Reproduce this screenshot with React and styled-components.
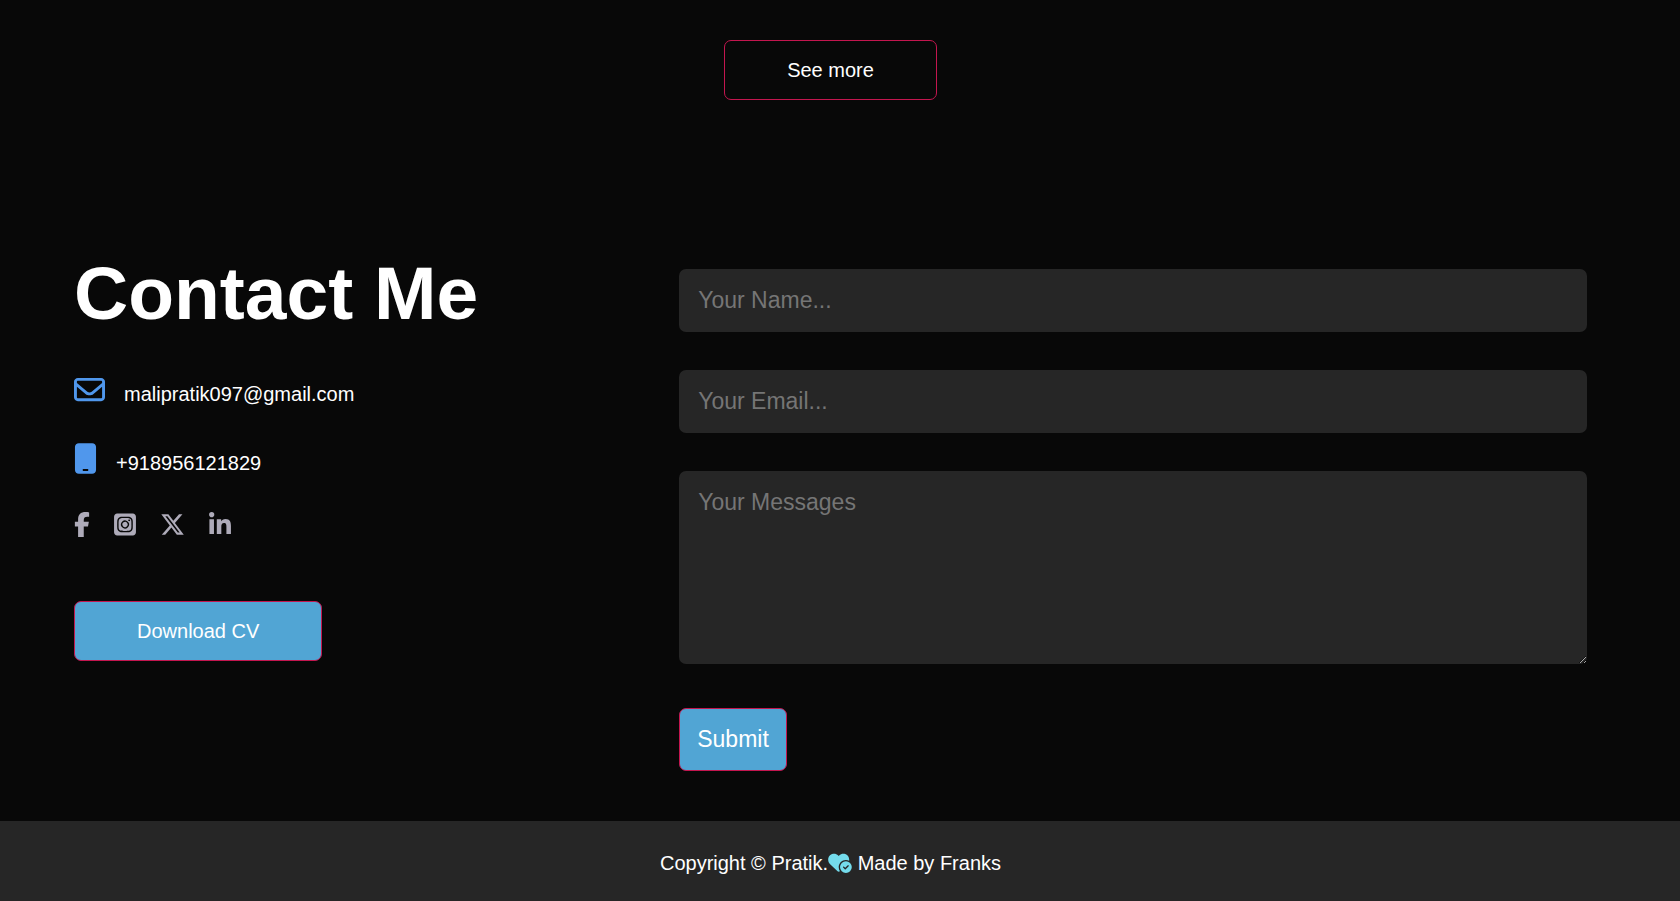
import React from 'react';
import styled, { createGlobalStyle, css } from 'styled-components';
import {
  FaRegEnvelope,
  FaMobile,
  FaFacebookF,
  FaSquareInstagram,
  FaXTwitter,
  FaLinkedinIn,
  FaHeartCircleCheck,
} from 'react-icons/fa6';

const GlobalStyle = createGlobalStyle`
  *, *::before, *::after { box-sizing: border-box; }
  body {
    margin: 0;
    background: #080808;
    color: #fff;
    font-family: "Liberation Sans", Arial, sans-serif;
    font-size: 20px;
    line-height: 23px;
  }
  a { color: inherit; text-decoration: none; }
  button, input, textarea { font-family: inherit; }
`;

const Page = styled.div`
  display: flex;
  flex-direction: column;
  min-height: 100vh;
`;

const Projects = styled.section`
  display: flex;
  justify-content: center;
  padding: 40px 19px 0 0;
`;

const outlined = css`
  border: 1px solid #c3164f;
  border-radius: 7px;
  color: #fff;
`;

const LinkButton = styled.a`
  ${outlined}
  align-self: flex-start;
  padding: 18px 62px 17px;
  background: ${(p) => (p.$filled ? '#51a5d4' : 'transparent')};
`;

const Contact = styled.main`
  display: flex;
  justify-content: space-between;
  padding: 150px 93px 50px 74px;
`;

const Details = styled.section`
  display: flex;
  flex-direction: column;
  flex-basis: 35%;
  gap: 38px;
`;

const Heading = styled.h1`
  margin: 0;
  font-size: 75px;
  line-height: 86px;
  font-weight: 700;
`;

const ContactLine = styled.a`
  display: flex;
  align-items: flex-end;
  align-self: flex-start;
  gap: 19px;
  line-height: 21px;

  svg {
    width: ${(p) => p.$iconWidth}px;
    height: 31px;
    color: #5097ec;
  }
`;

const Socials = styled.nav`
  display: flex;
  gap: 24px;
  margin-bottom: 26px;
  color: #aeabb9;
`;

const SocialLink = styled.a`
  svg {
    display: block;
    width: ${(p) => p.$iconWidth}px;
    height: 25px;
  }
`;

const Form = styled.form`
  display: flex;
  flex-direction: column;
  flex-basis: 60%;
  gap: 38px;
  padding-top: 19px;
`;

const fieldStyle = css`
  display: block;
  width: 100%;
  padding: 18px 19px;
  border: 0;
  border-radius: 7px;
  outline: none;
  background: #262626;
  color: #fff;
  font-size: 23px;
  line-height: 27px;

  &::placeholder { color: #757575; }
`;

const Field = styled.input`
  ${fieldStyle}
  height: 63px;
`;

const MessageField = styled.textarea`
  ${fieldStyle}
  height: 193px;
`;

const SubmitButton = styled.button`
  ${outlined}
  align-self: flex-start;
  margin-top: 6px;
  padding: 17px;
  background: #51a5d4;
  font-size: 23px;
  line-height: 27px;
  cursor: pointer;
`;

const Footer = styled.footer`
  flex-grow: 1;
  padding: 31px 19px 26px 0;
  background: #262626;
  text-align: center;

  p { margin: 0; }
  svg {
    width: 24px;
    height: 21px;
    color: #74dcec;
    vertical-align: -3px;
  }
`;

const socials = [
  { name: 'Facebook', Icon: FaFacebookF, width: 16 },
  { name: 'Instagram', Icon: FaSquareInstagram, width: 22 },
  { name: 'X', Icon: FaXTwitter, width: 25 },
  { name: 'LinkedIn', Icon: FaLinkedinIn, width: 22 },
];

export default function App() {
  return (
    <Page>
      <GlobalStyle />
      <Projects>
        <LinkButton href="#projects">See more</LinkButton>
      </Projects>
      <Contact>
        <Details>
          <Heading>Contact Me</Heading>
          <ContactLine href="mailto:malipratik097@gmail.com" $iconWidth={31}>
            <FaRegEnvelope />
            malipratik097@gmail.com
          </ContactLine>
          <ContactLine href="tel:+918956121829" $iconWidth={23}>
            <FaMobile />
            +918956121829
          </ContactLine>
          <Socials>
            {socials.map(({ name, Icon, width }) => (
              <SocialLink
                key={name}
                href={`#${name.toLowerCase()}`}
                aria-label={name}
                $iconWidth={width}
              >
                <Icon />
              </SocialLink>
            ))}
          </Socials>
          <LinkButton href="#cv" $filled>Download CV</LinkButton>
        </Details>
        <Form onSubmit={(e) => e.preventDefault()}>
          <Field type="text" name="name" placeholder="Your Name..." aria-label="Your Name" />
          <Field type="email" name="email" placeholder="Your Email..." aria-label="Your Email" />
          <MessageField name="message" placeholder="Your Messages" aria-label="Your Messages" />
          <SubmitButton type="submit">Submit</SubmitButton>
        </Form>
      </Contact>
      <Footer>
        <p>
          Copyright © Pratik.<FaHeartCircleCheck /> Made by Franks
        </p>
      </Footer>
    </Page>
  );
}
